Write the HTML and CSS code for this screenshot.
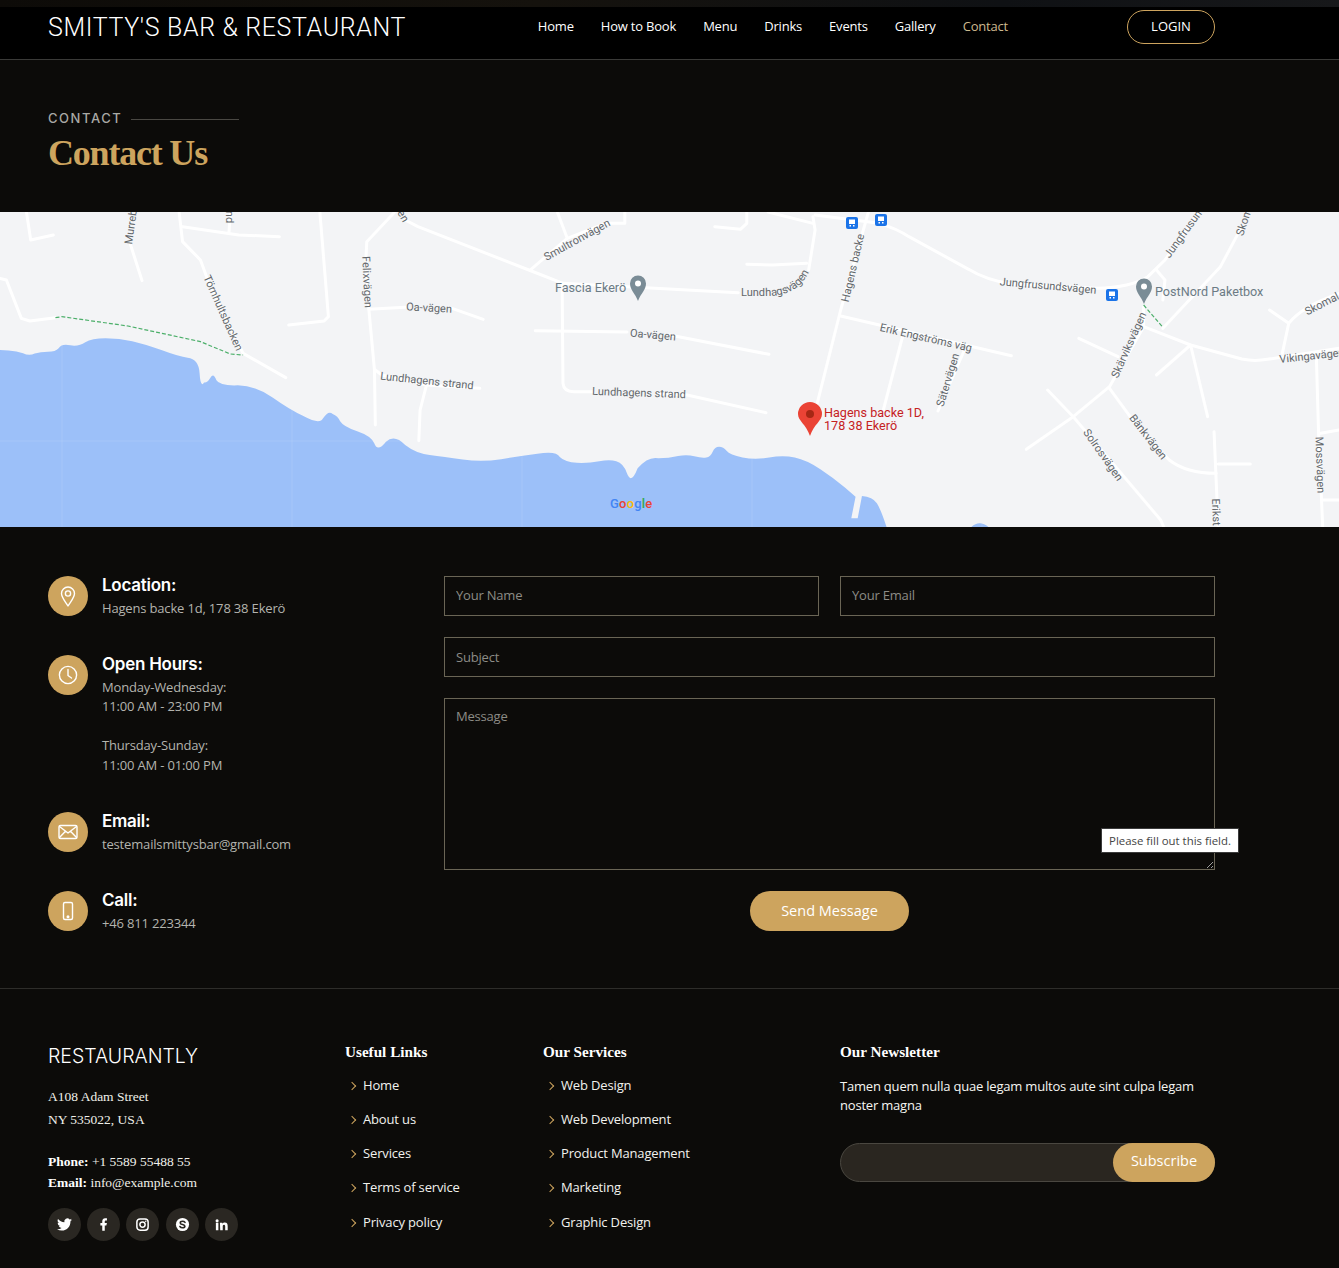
FILE: index.html
```html
<!DOCTYPE html>
<html lang="en">
<head>
<meta charset="utf-8">
<title>Contact - Smitty's Bar &amp; Restaurant</title>
<link rel="stylesheet" href="styles.css">
</head>
<body>
<div class="top-strip"></div>
<header class="site-header">
  <a class="brand">SMITTY'S BAR &amp; RESTAURANT</a>
  <nav class="main-nav">
    <a>Home</a><a>How to Book</a><a>Menu</a><a>Drinks</a><a>Events</a><a>Gallery</a><a class="active">Contact</a>
  </nav>
  <a class="login">LOGIN</a>
</header>

<section class="page-title">
  <div class="eyebrow"><span>CONTACT</span><i></i></div>
  <h1>Contact Us</h1>
</section>

<div class="map">
<svg class="map-svg" viewBox="0 0 1339 315" width="1339" height="315" xmlns="http://www.w3.org/2000/svg">
  <defs><path id="lundhagsvagen" d="M741 84 L766 84 C786 84 800 78 809 60"/></defs>
  <rect x="0" y="0" width="1339" height="315" fill="#f3f4f6"/>
  <g transform="translate(0 -2) scale(.4265 .33333)">
    <path class="water" d="M0 420 L20 421.500 Q40 423 54 429.500 Q68 438 81.500 430.500 Q95 425 112.500 425 Q130 425 137.500 414.500 Q145 400 165 406 Q185 410 200 396.500 Q215 385 247.500 385 Q280 385 310 393.500 Q340 402 380 421 Q420 440 440 443.500 Q466 447 468 490 Q470 535 478.500 517.500 Q485 520 492.500 505 Q500 485 507.500 511 Q515 528 557.500 526 Q600 527 640 563.500 Q680 600 712.500 619 Q750 645 757.500 625 Q770 600 780 612 Q792 618 797.500 634 Q805 650 837.500 664 Q870 678 877.500 700 Q885 728 905 695 Q925 672 950 705 Q975 730 1007.500 735 Q1040 740 1085 748.500 Q1130 757 1175 747.500 Q1220 738 1260 731.500 Q1305 722 1312.500 741 Q1325 757 1352.500 758.500 Q1380 760 1405 754 Q1430 748 1445 754 Q1462 760 1470 790 Q1480 825 1495 775 Q1520 738 1544 745 Q1568 745 1590 738 Q1611 733 1628 739 Q1646 745 1656 742.500 Q1666 740 1671 725 Q1676 710 1686 710 Q1696 710 1703.500 722.500 Q1711 735 1741 742.500 Q1771 750 1803.500 742.500 Q1836 735 1863.500 742.500 Q1891 750 1923.500 777.500 Q1956 805 1981 832.500 L2006 860 L1996 925 L2011 925 L2021 858 Q2046 860 2056 880 Q2066 900 2081 960 L0 960 Z"/>
    <path class="water" d="M2271 960 Q2296 920 2325 960 Z"/>
    <g class="roads">
      <path d="M62 6 L72 90 L125 75"/>
      <path d="M305 100 L333 212"/>
      <path d="M420 6 L428 95 L470 150 L490 220 L570 430 L670 503"/>
      <path d="M428 50 L560 75 L655 80 M540 10 L537 65"/>
      <path d="M750 6 L770 320 L760 333 L677 345"/>
      <path d="M0 205 L15 210 L50 325 L70 333 L130 323"/>
      <path d="M930 0 L860 95 L858 145 L865 300 L878 480 L880 645"/>
      <path d="M865 298 L950 292 M1060 295 L1133 328"/>
      <path d="M880 480 L895 495 L1000 525 L1125 535"/>
      <path d="M1000 525 L985 600 L982 692"/>
      <path d="M950 30 L980 50 L1240 180 L1320 220 L1568 237 L1731 248"/>
      <path d="M1245 178 L1330 85 L1305 0 M1330 85 L1420 40 L1465 40 L1465 6"/>
      <path d="M1318 220 L1320 520 Q1322 545 1345 545 L1390 545 M1540 550 L1611 555 L1796 608"/>
      <path d="M1255 362 L1470 366 M1570 375 L1803 433"/>
      <path class="trail" d="M130 323 L145 320 L300 348 L470 395 L540 432 L570 435"/>
    </g>
  </g>
  <g class="roads" transform="translate(670 -2) scale(.4267 .33333)">
    <path d="M335 20 L340 60 L325 180 M180 163 L240 165 L320 160"/>
    <path d="M105 50 L165 58 L180 40 L180 6"/>
    <path d="M230 6 L335 40"/>
    <path d="M465 6 L400 300 L345 580"/>
    <path d="M340 15 L490 40 Q530 55 560 80 L700 178 Q740 210 800 222 L1000 235 Q1080 232 1120 200 L1160 150 L1240 6"/>
    <path d="M400 318 L800 437"/>
    <path d="M545 380 L500 600"/>
    <path d="M690 420 L628 603"/>
    <path d="M1140 180 L1160 210 L1155 270 M1340 50 L1290 170 L1155 355"/>
    <path d="M1110 290 L1110 350 L1030 530 L945 620 L835 718"/>
    <path d="M1110 350 L1220 405 L1340 447 Q1370 455 1400 448 L1568 415"/>
    <path d="M1220 405 L1260 620 M1220 405 L1140 495"/>
    <path d="M958 385 L1050 440"/>
    <path d="M885 540 L945 620 L1150 930 L1160 960"/>
    <path d="M1030 535 L1090 640 L1170 750 Q1210 790 1280 790"/>
    <path d="M1275 665 L1285 960 M1285 762 L1360 762"/>
    <path d="M1405 300 L1450 340 Q1480 290 1568 250 M1450 340 L1435 430"/>
    <path d="M1515 450 L1520 670 L1530 960 M1525 670 L1568 660 M1530 870 L1568 870"/>
    <path class="trail" d="M1110 285 L1155 352"/>
  </g>
  <path class="seams" d="M62 0V315M292 0V315M522 0V315M752 0V315M982 0V315M1212 0V315M0 229H1339"/>
  <g class="labels">
    <text transform="translate(131 15) rotate(-82)">Murreb</text>
    <text transform="translate(229 5) rotate(90)">nd</text>
    <text transform="translate(403 4) rotate(60)">en</text>
    <text transform="translate(223 101) rotate(66)">Törnhultsbacken</text>
    <text transform="translate(367 70) rotate(87)">Felixvägen</text>
    <text transform="translate(429 96) rotate(3)">Oa-vägen</text>
    <text transform="translate(427 169) rotate(6)">Lundhagens strand</text>
    <text transform="translate(577 28) rotate(-29)">Smultronvägen</text>
    <text transform="translate(653 123) rotate(5)">Oa-vägen</text>
    <text transform="translate(639 181) rotate(2)">Lundhagens strand</text>
    <text class="on-path"><textPath href="#lundhagsvagen">Lundhagsvägen</textPath></text>
    <text transform="translate(853 56) rotate(-77)">Hagens backe</text>
    <text transform="translate(926 126) rotate(13)">Erik Engströms väg</text>
    <text transform="translate(948 168) rotate(-73)">Sätervägen</text>
    <text transform="translate(1048 74) rotate(5)">Jungfrusundsvägen</text>
    <text transform="translate(1183 22) rotate(-54)">Jungfrusun</text>
    <text transform="translate(1244 10) rotate(-72)">Skom</text>
    <text transform="translate(1129 133) rotate(-66)">Skärviksvägen</text>
    <text transform="translate(1148 225) rotate(52)">Bänkvägen</text>
    <text transform="translate(1103 243) rotate(55)">Solrosvägen</text>
    <text transform="translate(1216 300) rotate(88)">Erikst</text>
    <text transform="translate(1322 92) rotate(-27)">Skomal</text>
    <text transform="translate(1312 144) rotate(-6)">Vikingavägen</text>
    <text transform="translate(1320 253) rotate(88)">Mossvägen</text>
    <text class="poi" x="555" y="80">Fascia Ekerö</text>
    <text class="poi" x="1155" y="84">PostNord Paketbox</text>
    <text class="place" x="824" y="205">Hagens backe 1D,</text>
    <text class="place" x="824" y="217.500">178 38 Ekerö</text>
    <text class="google" x="610" y="296"><tspan fill="#4285f4">G</tspan><tspan fill="#ea4335">o</tspan><tspan fill="#fbbc05">o</tspan><tspan fill="#4285f4">g</tspan><tspan fill="#34a853">l</tspan><tspan fill="#ea4335">e</tspan></text>
  </g>
  <path d="M638 89 C635 81 630 78 630 71.500 A8 8 0 0 1 646 71.500 C646 78 641 81 638 89 Z" fill="#7a8c96"/>
  <circle cx="638" cy="71.500" r="3" fill="#fff"/>
  <path d="M1144 92 C1141 84 1136 81 1136 74.500 A8 8 0 0 1 1152 74.500 C1152 81 1147 84 1144 92 Z" fill="#7a8c96"/>
  <circle cx="1144" cy="74.500" r="3" fill="#fff"/>
  <path d="M810 224 C806 212 798 209 798 202 A12 12 0 0 1 822 202 C822 209 814 212 810 224 Z" fill="#ea4335"/>
  <circle cx="810" cy="202" r="4" fill="#a52714"/>
  <g class="bus">
    <rect x="846" y="5" width="12" height="12" rx="2"/><path d="M849 7.500h6v4.500h-6zM849.500 13h1.500v1.500h-1.500zM853 13h1.500v1.500h-1.500z" fill="#fff"/>
    <rect x="875" y="2" width="12" height="12" rx="2"/><path d="M878 4.500h6v4.500h-6zM878.500 10h1.500v1.500h-1.500zM882 10h1.500v1.500h-1.500z" fill="#fff"/>
    <rect x="1106" y="77" width="12" height="12" rx="2"/><path d="M1109 79.500h6v4.500h-6zM1109.500 85h1.500v1.500h-1.500zM1113 85h1.500v1.500h-1.500z" fill="#fff"/>
  </g>
</svg>
</div>

<main class="contact">
  <div class="info">
    <div class="info-item">
      <span class="info-icon"><svg viewBox="0 0 24 24"><path d="M12 22 C9 17 5.500 13.500 5.500 9.500 A6.500 6.500 0 0 1 18.500 9.500 C18.500 13.500 15 17 12 22 Z"/><circle cx="12" cy="9.500" r="2.600"/></svg></span>
      <div><h4>Location:</h4><p>Hagens backe 1d, 178 38 Ekerö</p></div>
    </div>
    <div class="info-item">
      <span class="info-icon"><svg viewBox="0 0 24 24"><circle cx="12" cy="12" r="8.600"/><path d="M12 6.500V12.500L15.500 15"/></svg></span>
      <div><h4>Open Hours:</h4><p>Monday-Wednesday:<br>11:00 AM - 23:00 PM<br><br>Thursday-Sunday:<br>11:00 AM - 01:00 PM</p></div>
    </div>
    <div class="info-item">
      <span class="info-icon"><svg viewBox="0 0 24 24"><rect x="3" y="5.500" width="18" height="13" rx="1.500"/><path d="M3.500 6.500L12 13L20.500 6.500M3.500 17.500L9.500 11.200M20.500 17.500L14.500 11.200"/></svg></span>
      <div><h4>Email:</h4><p>testemailsmittysbar@gmail.com</p></div>
    </div>
    <div class="info-item">
      <span class="info-icon"><svg viewBox="0 0 24 24"><rect x="7.500" y="3.500" width="9" height="17" rx="1.500"/><circle class="dot" cx="12" cy="17.800" r="0.800"/></svg></span>
      <div><h4>Call:</h4><p>+46 811 223344</p></div>
    </div>
  </div>

  <form class="contact-form">
    <div class="form-row">
      <input type="text" placeholder="Your Name">
      <input type="text" placeholder="Your Email">
    </div>
    <input type="text" placeholder="Subject">
    <div class="message-wrap">
      <textarea placeholder="Message"></textarea>
      <div class="tooltip">Please fill out this field.</div>
    </div>
    <button type="button" class="send">Send Message</button>
  </form>
</main>

<footer class="footer">
  <div class="foot-col">
    <h3>RESTAURANTLY</h3>
    <p class="address">A108 Adam Street<br>NY 535022, USA</p>
    <p class="phones"><strong>Phone:</strong> +1 5589 55488 55<br><strong>Email:</strong> info@example.com</p>
    <div class="socials">
      <a><svg viewBox="0 0 24 24"><path d="M23.953 4.57a10 10 0 01-2.825.775 4.958 4.958 0 002.163-2.723c-.951.555-2.005.959-3.127 1.184a4.92 4.92 0 00-8.384 4.482C7.69 8.095 4.067 6.13 1.64 3.162a4.822 4.822 0 00-.666 2.475c0 1.71.87 3.213 2.188 4.096a4.904 4.904 0 01-2.228-.616v.06a4.923 4.923 0 003.946 4.827 4.996 4.996 0 01-2.212.085 4.936 4.936 0 004.604 3.417 9.867 9.867 0 01-6.102 2.105c-.39 0-.779-.023-1.17-.067a13.995 13.995 0 007.557 2.209c9.053 0 13.998-7.496 13.985-14.202 0-.209 0-.42-.015-.63A9.935 9.935 0 0024 4.59z"/></svg></a>
      <a><svg viewBox="0 0 24 24"><path d="M14 13.500h2.500l1-4H14v-2c0-1.030 0-2 2-2h1.500V2.140c-.326-.043-1.557-.14-2.857-.14C11.928 2 10 3.657 10 6.700v2.800H7v4h3V22h4v-8.500z"/></svg></a>
      <a><svg viewBox="0 0 24 24" class="ig"><rect x="3" y="3" width="18" height="18" rx="5"/><circle cx="12" cy="12" r="4.200"/><circle class="ig-dot" cx="17.200" cy="6.800" r="1.200"/></svg></a>
      <a><svg viewBox="0 0 24 24"><circle cx="12" cy="12" r="10.500"/><path class="sk" d="M16 8.600C15 7.200 13.500 6.800 12 6.800c-2 0-3.600 1-3.600 2.600 0 3.400 7.400 1.900 7.400 5.200 0 1.600-1.700 2.600-3.800 2.600-1.700 0-3.200-.6-4.100-2"/></svg></a>
      <a><svg viewBox="0 0 24 24"><path d="M4.980 3.500a2.500 2.500 0 1 1-.02 5 2.500 2.500 0 0 1 .02-5zM3 9h4v12H3zM9.500 9h3.800v1.700h.05c.53-1 1.830-2.050 3.770-2.050 4.030 0 4.780 2.650 4.780 6.100V21h-4v-5.500c0-1.300-.03-3-1.830-3s-2.100 1.430-2.100 2.900V21h-4z"/></svg></a>
    </div>
  </div>
  <div class="foot-col">
    <h4>Useful Links</h4>
    <ul>
      <li>Home</li><li>About us</li><li>Services</li><li>Terms of service</li><li>Privacy policy</li>
    </ul>
  </div>
  <div class="foot-col">
    <h4>Our Services</h4>
    <ul>
      <li>Web Design</li><li>Web Development</li><li>Product Management</li><li>Marketing</li><li>Graphic Design</li>
    </ul>
  </div>
  <div class="foot-col">
    <h4>Our Newsletter</h4>
    <p class="news-text">Tamen quem nulla quae legam multos aute sint culpa legam noster magna</p>
    <div class="subscribe"><input type="email" aria-label="Email"><button type="button">Subscribe</button></div>
  </div>
</footer>
</body>
</html>
```

FILE: styles.css
```css
* { box-sizing: border-box; }
html, body { margin: 0; padding: 0; }
body { background: #0c0b09; color: #fff; font-family: "Open Sans", sans-serif; font-size: 13px; }

.top-strip { height: 7px; background: linear-gradient(90deg, #0d0b08, #15120d 40%, #0f1114 75%, #17181a); }
.site-header { height: 53px; background: #000; border-bottom: 1px solid #3a3a38; display: flex; align-items: flex-start; padding: 3px 124px 0 48px; }
.brand { font-family: Roboto, sans-serif; font-weight: 300; font-size: 25px; line-height: 36px; letter-spacing: .64px; color: #fff; }
.main-nav { margin-left: auto; margin-right: 119px; display: flex; gap: 27px; line-height: 32px; font-size: 13px; letter-spacing: -.2px; font-weight: 500; }
.main-nav a { color: #fff; }
.main-nav a.active { color: #cdb98f; font-weight: 400; }
.login { width: 88px; height: 34px; border: 1px solid #cda45e; border-radius: 17px; font-size: 13px; font-weight: 500; line-height: 30px; text-align: center; color: #fff; }

.page-title { height: 152px; padding: 49px 48px 0; background: #0c0b09; }
.eyebrow { display: flex; align-items: center; gap: 9px; height: 17px; font-family: Inter, sans-serif; font-size: 13px; font-weight: 500; letter-spacing: 1.55px; color: #a9a9a5; }
.eyebrow i { display: block; width: 108px; height: 1px; margin-top: 3px; background: #4a4843; }
.page-title h1 { margin: 5px 0 0; font-family: "Liberation Serif", serif; font-size: 36px; line-height: 44px; font-weight: 700; letter-spacing: -1.2px; color: #cda45e; }

.map { height: 315px; overflow: hidden; }
.map-svg { display: block; }
.water { fill: #9cc0f9; }
.roads path { fill: none; stroke: #fff; stroke-width: 3px; stroke-linecap: round; stroke-linejoin: round; vector-effect: non-scaling-stroke; }
.roads path.trail { stroke: #4caf6a; stroke-width: 1.2px; stroke-dasharray: 4 2; stroke-linecap: butt; }
.seams { fill: none; stroke: #fff; stroke-width: 1px; opacity: .1; }
.labels text { font-family: Roboto, sans-serif; font-size: 11px; fill: #62676b; text-anchor: middle; dominant-baseline: central; }
.labels .on-path { text-anchor: start; dominant-baseline: auto; }
.labels .poi { font-size: 12.6px; fill: #6b7b85; text-anchor: start; dominant-baseline: auto; }
.labels .place { font-size: 12.6px; fill: #c5221f; text-anchor: start; dominant-baseline: auto; }
.labels .google { font-size: 13px; font-weight: 500; text-anchor: start; dominant-baseline: auto; letter-spacing: .2px; }
.bus rect { fill: #1a73e8; }

.contact { height: 461px; padding: 49px 124px 0 48px; display: flex; }
.info { width: 396px; flex: none; }
.info-item { display: flex; gap: 14px; margin-bottom: 37px; }
.info-icon { width: 40px; height: 40px; border-radius: 50%; background: #cda45e; display: flex; align-items: center; justify-content: center; flex: none; }
.info-icon svg { width: 24px; height: 24px; fill: none; stroke: #fff; stroke-width: 1.4; stroke-linecap: round; stroke-linejoin: round; }
.info-icon .dot { fill: #fff; }
.info-item h4 { margin: 0 0 3.5px; font-family: Inter, sans-serif; font-size: 17px; font-weight: 600; line-height: 19px; letter-spacing: -.25px; color: #fff; }
.info-item p { margin: 0; font-size: 13px; line-height: 19.5px; letter-spacing: -.17px; color: #b4b4ae; }

.contact-form { flex: 1; display: flex; flex-direction: column; gap: 21px; align-items: stretch; }
.form-row { display: flex; gap: 21px; }
.form-row input { flex: 1; min-width: 0; }
.contact-form input, .contact-form textarea { height: 40px; background: #0c0b09; border: 1px solid #6a6555; border-radius: 0; color: #fff; font-family: "Open Sans", sans-serif; font-size: 13px; letter-spacing: -.2px; padding: 0 11px; outline: none; display: block; width: 100%; margin: 0; }
.contact-form .form-row input { padding-bottom: 3px; }
.contact-form input::placeholder, .contact-form textarea::placeholder { color: #8c8c86; opacity: 1; }
.message-wrap { position: relative; height: 172px; }
.contact-form textarea { height: 172px; padding-top: 8px; resize: vertical; }
.tooltip { position: absolute; left: 657px; top: 130px; width: 138px; height: 25px; background: #fff; border: 1px solid #3b3b3b; color: #444; font-size: 11.4px; line-height: 23px; text-align: center; white-space: nowrap; }
.send { align-self: center; width: 159px; height: 40px; border: 0; border-radius: 20px; padding: 0 0 2px; background: #cda45e; color: #fff; font-family: "Open Sans", sans-serif; font-size: 14.5px; font-weight: 400; }

.footer { height: 280px; border-top: 1px solid #2e2d2a; padding: 53px 0 0 48px; display: grid; grid-template-columns: 297px 198px 297px 375px; align-items: start; }
.foot-col h3 { margin: 0; font-family: Inter, sans-serif; font-weight: 300; font-size: 19.5px; line-height: 28px; color: #fff; }
.foot-col h4 { margin: 0; font-family: "Liberation Serif", serif; font-weight: 700; font-size: 15.2px; line-height: 20px; color: #fff; }
.address, .phones { margin: 0; font-family: "Liberation Serif", serif; font-size: 13.5px; color: #f0f0ea; }
.address { margin-top: 15px; line-height: 23px; }
.phones { margin-top: 20px; line-height: 21px; }
.phones strong { color: #fff; }
.socials { display: flex; gap: 6.2px; margin-top: 15px; }
.socials a { width: 33px; height: 33px; border-radius: 50%; background: #2a2722; display: flex; align-items: center; justify-content: center; }
.socials svg { width: 15px; height: 15px; fill: #fff; }
.socials .ig { fill: none; stroke: #fff; stroke-width: 2.4; }
.socials .ig .ig-dot { fill: #fff; stroke: none; }
.socials .sk { fill: none; stroke: #2a2722; stroke-width: 2.6; stroke-linecap: round; }
.foot-col ul { list-style: none; margin: 13px 0 0; padding: 0; }
.foot-col li { position: relative; height: 34.15px; line-height: 20px; padding-left: 18px; font-size: 13px; letter-spacing: -.15px; color: #f2f2ee; }
.foot-col li::before { content: ""; position: absolute; left: 4px; top: 8px; width: 5px; height: 5px; border-top: 1.7px solid #cda45e; border-right: 1.7px solid #cda45e; transform: rotate(45deg); }
.news-text { margin: 15px 0 0; font-size: 13px; line-height: 19px; letter-spacing: -.2px; color: #f6f6f2; width: 375px; }
.subscribe { display: flex; margin-top: 28px; height: 39px; width: 375px; border-radius: 20px; background: #2a2620; border: 1px solid #4a4740; position: relative; }
.subscribe input { flex: 1; min-width: 0; background: transparent; border: 0; outline: none; }
.subscribe button { position: absolute; right: -1px; top: -1px; width: 102px; height: 39px; border: 0; border-radius: 20px; padding: 0 0 4px; background: #cda45e; color: #fff; font-family: "Open Sans", sans-serif; font-size: 14.5px; }
```
